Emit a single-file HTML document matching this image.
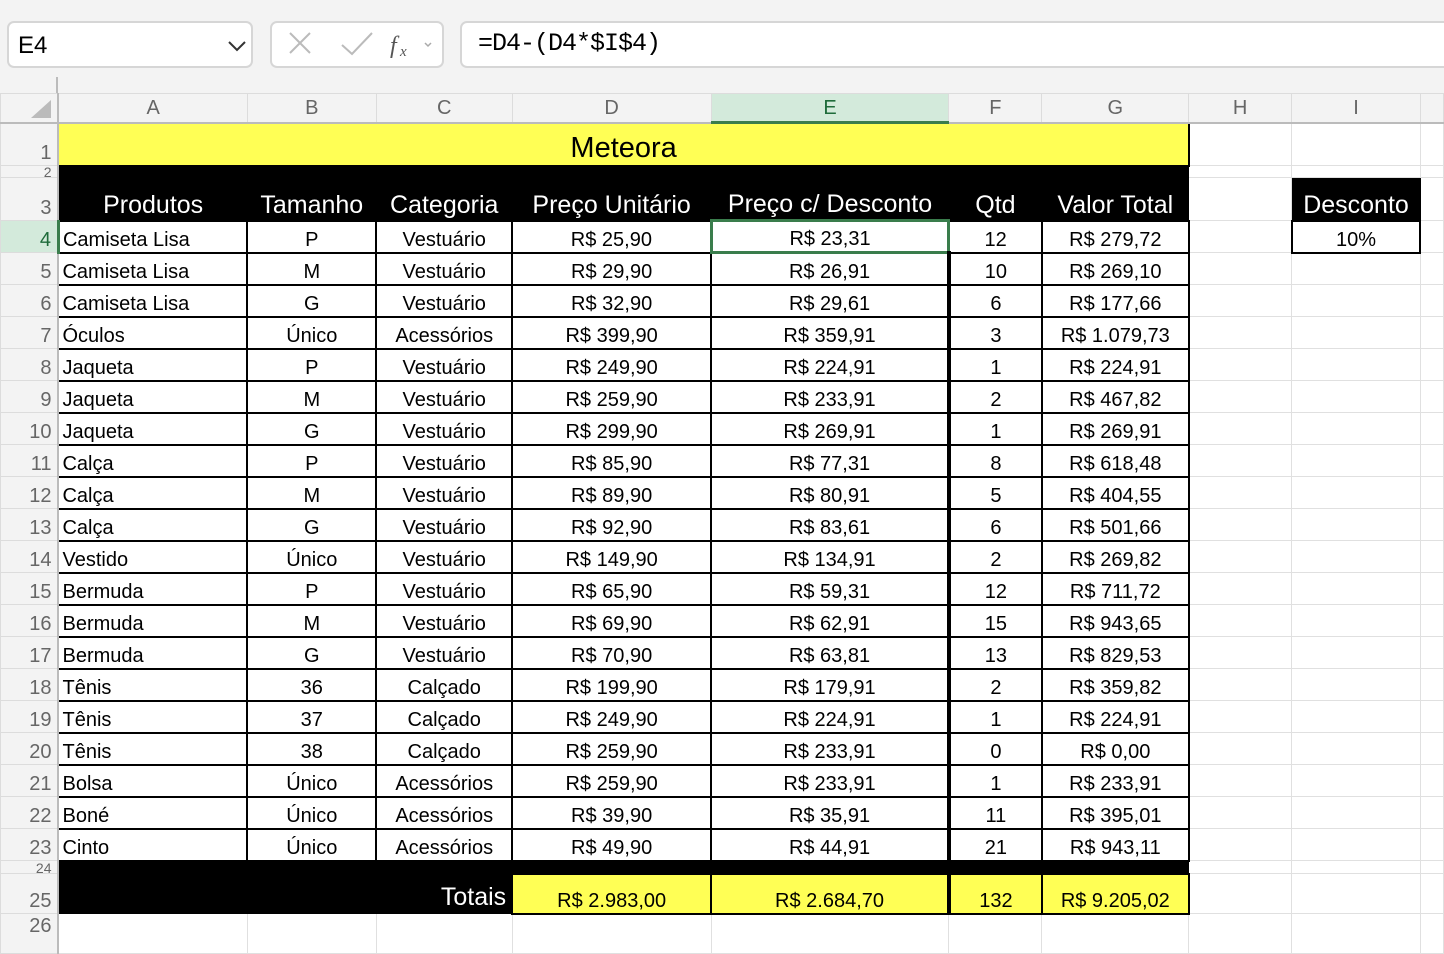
<!DOCTYPE html>
<html><head><meta charset="utf-8"><style>
*{box-sizing:border-box;margin:0;padding:0}
body{width:1444px;height:938px;overflow:hidden;background:#f3f3f3;font-family:"Liberation Sans",sans-serif;position:relative}
.box{position:absolute;background:#fff;border:2px solid #d6d6d6;border-radius:7px}
table{position:absolute;left:0;top:93px;border-collapse:collapse;table-layout:fixed;background:#fff}
td{border:1px solid #e0e0e0;font-size:20px;color:#000;white-space:nowrap;overflow:hidden;padding:0 2px;vertical-align:bottom;line-height:24px}
tr.ch td{background:#f3f3f3;color:#666;text-align:center;font-size:20px;vertical-align:middle;border-color:#dcdcdc;border-bottom:2px solid #bbb;line-height:22px}
td.rh{background:#f3f3f3;color:#666;text-align:right;padding-right:6px;border-color:#dcdcdc;border-right:2px solid #bbb}
.d td.c{border:2px solid #000;text-align:center}
.d td.l{border:2px solid #000;text-align:left;padding-left:3px}
.d td.e{border-right:4px solid #000}
.hd td.k{background:#000;color:#fff;font-size:25px;text-align:center;border-color:#000;line-height:30px}
.k{background:#000;border-color:#000!important}
.y{background:#ffff55}
tr.sm td{font-size:14px;line-height:10px}
</style></head><body>
<div class="box" style="left:7px;top:21px;width:246px;height:47px"><span style="position:absolute;left:9px;top:9px;font-size:24px">E4</span><svg style="position:absolute;left:218px;top:17px" width="20" height="12"><path d="M2 2 L10 10 L18 2" fill="none" stroke="#333" stroke-width="2"/></svg></div>
<div class="box" style="left:270px;top:21px;width:174px;height:47px"><svg width="170" height="43"><path d="M18 10 L38 30 M38 10 L18 30" stroke="#bbb" stroke-width="2"/><path d="M70 22 L80 31 L100 10" fill="none" stroke="#bbb" stroke-width="2"/><text x="118" y="30" font-size="24" font-style="italic" fill="#555" font-family="Liberation Serif">f</text><text x="128" y="33" font-size="15" font-style="italic" fill="#555" font-family="Liberation Serif">x</text><path d="M153 20 L156 23 L159 20" fill="none" stroke="#aaa" stroke-width="1.5"/></svg></div>
<div class="box" style="left:460px;top:21px;width:1000px;height:47px"><span style="position:absolute;left:16px;top:6px;font-size:25px;font-family:'Liberation Mono',monospace;letter-spacing:-1px">=D4-(D4*$I$4)</span></div>
<div style="position:absolute;left:56px;top:77px;width:2px;height:16px;background:#bbb"></div>
<table>
<colgroup><col style="width:58px"><col style="width:189px"><col style="width:129px"><col style="width:136px"><col style="width:199px"><col style="width:238px"><col style="width:93px"><col style="width:147px"><col style="width:103px"><col style="width:129px"><col style="width:23px"></colgroup>
<tr class="ch" style="height:29px"><td style="background:#f3f3f3;border-right:2px solid #bbb"><svg width="50" height="22" style="display:block"><path d="M28 21 L48 21 L48 3 Z" fill="#bbb"/></svg></td><td>A</td><td>B</td><td>C</td><td>D</td><td style="background:#d3eadb;color:#1e6b3a;border-bottom:3px solid #3a7d4c">E</td><td>F</td><td>G</td><td>H</td><td>I</td><td></td></tr>
<tr style="height:43px"><td class="rh">1</td><td colspan="7" class="y" style="border:2px solid #000;text-align:center;font-size:29px;line-height:34px">Meteora</td><td></td><td></td><td></td></tr>
<tr class="sm" style="height:12px"><td class="rh">2</td><td colspan="7" class="k"></td><td></td><td></td><td></td></tr>
<tr class="hd" style="height:43px"><td class="rh">3</td><td class="k">Produtos</td><td class="k">Tamanho</td><td class="k">Categoria</td><td class="k">Preço Unitário</td><td class="k">Preço c/ Desconto</td><td class="k">Qtd</td><td class="k">Valor Total</td><td></td><td class="k">Desconto</td><td></td></tr>
<tr class="d" style="height:32px"><td class="rh" style="background:#d3eadb;color:#1e6b3a;border-right:3px solid #3a7d4c">4</td><td class="l">Camiseta Lisa</td><td class="c">P</td><td class="c">Vestuário</td><td class="c">R$ 25,90</td><td class="c" style="border:3px solid #3a7d4c">R$ 23,31</td><td class="c">12</td><td class="c">R$ 279,72</td><td></td><td class="c">10%</td><td></td></tr>
<tr class="d" style="height:32px"><td class="rh">5</td><td class="l">Camiseta Lisa</td><td class="c">M</td><td class="c">Vestuário</td><td class="c">R$ 29,90</td><td class="c e">R$ 26,91</td><td class="c">10</td><td class="c">R$ 269,10</td><td></td><td></td><td></td></tr>
<tr class="d" style="height:32px"><td class="rh">6</td><td class="l">Camiseta Lisa</td><td class="c">G</td><td class="c">Vestuário</td><td class="c">R$ 32,90</td><td class="c e">R$ 29,61</td><td class="c">6</td><td class="c">R$ 177,66</td><td></td><td></td><td></td></tr>
<tr class="d" style="height:32px"><td class="rh">7</td><td class="l">Óculos</td><td class="c">Único</td><td class="c">Acessórios</td><td class="c">R$ 399,90</td><td class="c e">R$ 359,91</td><td class="c">3</td><td class="c">R$ 1.079,73</td><td></td><td></td><td></td></tr>
<tr class="d" style="height:32px"><td class="rh">8</td><td class="l">Jaqueta</td><td class="c">P</td><td class="c">Vestuário</td><td class="c">R$ 249,90</td><td class="c e">R$ 224,91</td><td class="c">1</td><td class="c">R$ 224,91</td><td></td><td></td><td></td></tr>
<tr class="d" style="height:32px"><td class="rh">9</td><td class="l">Jaqueta</td><td class="c">M</td><td class="c">Vestuário</td><td class="c">R$ 259,90</td><td class="c e">R$ 233,91</td><td class="c">2</td><td class="c">R$ 467,82</td><td></td><td></td><td></td></tr>
<tr class="d" style="height:32px"><td class="rh">10</td><td class="l">Jaqueta</td><td class="c">G</td><td class="c">Vestuário</td><td class="c">R$ 299,90</td><td class="c e">R$ 269,91</td><td class="c">1</td><td class="c">R$ 269,91</td><td></td><td></td><td></td></tr>
<tr class="d" style="height:32px"><td class="rh">11</td><td class="l">Calça</td><td class="c">P</td><td class="c">Vestuário</td><td class="c">R$ 85,90</td><td class="c e">R$ 77,31</td><td class="c">8</td><td class="c">R$ 618,48</td><td></td><td></td><td></td></tr>
<tr class="d" style="height:32px"><td class="rh">12</td><td class="l">Calça</td><td class="c">M</td><td class="c">Vestuário</td><td class="c">R$ 89,90</td><td class="c e">R$ 80,91</td><td class="c">5</td><td class="c">R$ 404,55</td><td></td><td></td><td></td></tr>
<tr class="d" style="height:32px"><td class="rh">13</td><td class="l">Calça</td><td class="c">G</td><td class="c">Vestuário</td><td class="c">R$ 92,90</td><td class="c e">R$ 83,61</td><td class="c">6</td><td class="c">R$ 501,66</td><td></td><td></td><td></td></tr>
<tr class="d" style="height:32px"><td class="rh">14</td><td class="l">Vestido</td><td class="c">Único</td><td class="c">Vestuário</td><td class="c">R$ 149,90</td><td class="c e">R$ 134,91</td><td class="c">2</td><td class="c">R$ 269,82</td><td></td><td></td><td></td></tr>
<tr class="d" style="height:32px"><td class="rh">15</td><td class="l">Bermuda</td><td class="c">P</td><td class="c">Vestuário</td><td class="c">R$ 65,90</td><td class="c e">R$ 59,31</td><td class="c">12</td><td class="c">R$ 711,72</td><td></td><td></td><td></td></tr>
<tr class="d" style="height:32px"><td class="rh">16</td><td class="l">Bermuda</td><td class="c">M</td><td class="c">Vestuário</td><td class="c">R$ 69,90</td><td class="c e">R$ 62,91</td><td class="c">15</td><td class="c">R$ 943,65</td><td></td><td></td><td></td></tr>
<tr class="d" style="height:32px"><td class="rh">17</td><td class="l">Bermuda</td><td class="c">G</td><td class="c">Vestuário</td><td class="c">R$ 70,90</td><td class="c e">R$ 63,81</td><td class="c">13</td><td class="c">R$ 829,53</td><td></td><td></td><td></td></tr>
<tr class="d" style="height:32px"><td class="rh">18</td><td class="l">Tênis</td><td class="c">36</td><td class="c">Calçado</td><td class="c">R$ 199,90</td><td class="c e">R$ 179,91</td><td class="c">2</td><td class="c">R$ 359,82</td><td></td><td></td><td></td></tr>
<tr class="d" style="height:32px"><td class="rh">19</td><td class="l">Tênis</td><td class="c">37</td><td class="c">Calçado</td><td class="c">R$ 249,90</td><td class="c e">R$ 224,91</td><td class="c">1</td><td class="c">R$ 224,91</td><td></td><td></td><td></td></tr>
<tr class="d" style="height:32px"><td class="rh">20</td><td class="l">Tênis</td><td class="c">38</td><td class="c">Calçado</td><td class="c">R$ 259,90</td><td class="c e">R$ 233,91</td><td class="c">0</td><td class="c">R$ 0,00</td><td></td><td></td><td></td></tr>
<tr class="d" style="height:32px"><td class="rh">21</td><td class="l">Bolsa</td><td class="c">Único</td><td class="c">Acessórios</td><td class="c">R$ 259,90</td><td class="c e">R$ 233,91</td><td class="c">1</td><td class="c">R$ 233,91</td><td></td><td></td><td></td></tr>
<tr class="d" style="height:32px"><td class="rh">22</td><td class="l">Boné</td><td class="c">Único</td><td class="c">Acessórios</td><td class="c">R$ 39,90</td><td class="c e">R$ 35,91</td><td class="c">11</td><td class="c">R$ 395,01</td><td></td><td></td><td></td></tr>
<tr class="d" style="height:32px"><td class="rh">23</td><td class="l">Cinto</td><td class="c">Único</td><td class="c">Acessórios</td><td class="c">R$ 49,90</td><td class="c e">R$ 44,91</td><td class="c">21</td><td class="c">R$ 943,11</td><td></td><td></td><td></td></tr>
<tr class="sm" style="height:13px"><td class="rh">24</td><td colspan="7" class="k"></td><td></td><td></td><td></td></tr>
<tr class="d" style="height:40px"><td class="rh">25</td><td colspan="3" class="k" style="text-align:right;color:#fff;font-size:25px;line-height:32px;padding-right:5px">Totais</td><td class="c y">R$ 2.983,00</td><td class="c y" style="border-right:4px solid #000">R$ 2.684,70</td><td class="c y">132</td><td class="c y">R$ 9.205,02</td><td></td><td></td><td></td></tr>
<tr style="height:40px"><td class="rh" style="vertical-align:top">26</td><td></td><td></td><td></td><td></td><td></td><td></td><td></td><td></td><td></td><td></td></tr>
</table>
</body></html>
